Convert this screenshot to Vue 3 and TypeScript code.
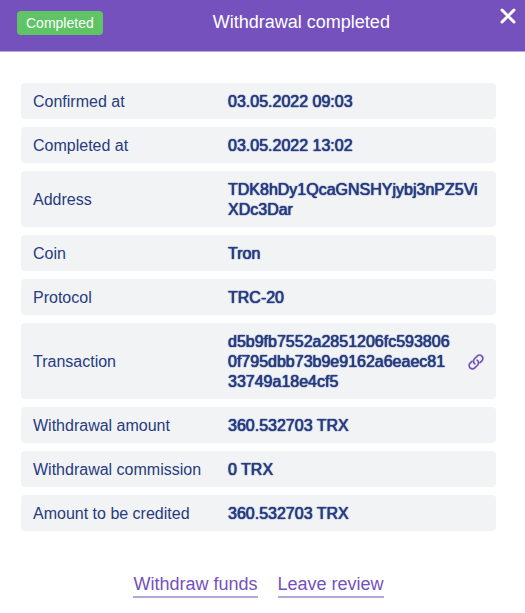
<script setup lang="ts">
interface Detail {
  label: string
  value: string
  href?: string
}

const details: Detail[] = [
  { label: 'Confirmed at', value: '03.05.2022 09:03' },
  { label: 'Completed at', value: '03.05.2022 13:02' },
  { label: 'Address', value: 'TDK8hDy1QcaGNSHYjybj3nPZ5ViXDc3Dar' },
  { label: 'Coin', value: 'Tron' },
  { label: 'Protocol', value: 'TRC-20' },
  {
    label: 'Transaction',
    value: 'd5b9fb7552a2851206fc5938060f795dbb73b9e9162a6eaec8133749a18e4cf5',
    href: '#transaction',
  },
  { label: 'Withdrawal amount', value: '360.532703 TRX' },
  { label: 'Withdrawal commission', value: '0 TRX' },
  { label: 'Amount to be credited', value: '360.532703 TRX' },
]
</script>

<template>
  <main class="dialog">
    <header class="header">
      <span class="badge">Completed</span>
      <h1 class="title">Withdrawal completed</h1>
      <button class="close" type="button" aria-label="Close">
        <svg width="16" height="16" viewBox="0 0 16 16" aria-hidden="true">
          <path d="M2 2L14 14M14 2L2 14" fill="none" stroke="currentColor" stroke-width="3" stroke-linecap="round" />
        </svg>
      </button>
    </header>

    <dl class="details">
      <div v-for="item in details" :key="item.label" class="row">
        <dt class="label">{{ item.label }}</dt>
        <dd class="value">
          <span class="text">{{ item.value }}</span>
          <a v-if="item.href" class="icon-link" :href="item.href" aria-label="View transaction">
            <svg width="16" height="16" viewBox="0 0 16 16" aria-hidden="true">
              <g fill="none" stroke="currentColor" stroke-width="1.7" stroke-linecap="round" stroke-linejoin="round">
                <path d="M6.9 9.9a3.3 3.3 0 0 1-.6-4.9l2.9-2.9a3.3 3.3 0 0 1 4.7 4.7l-1.9 1.9" />
                <path d="M9.1 6.1a3.3 3.3 0 0 1 .6 4.9l-2.9 2.9a3.3 3.3 0 0 1-4.7-4.7l1.9-1.9" />
              </g>
            </svg>
          </a>
        </dd>
      </div>
    </dl>

    <nav class="actions">
      <a class="action" href="#withdraw">Withdraw funds</a>
      <a class="action" href="#review">Leave review</a>
    </nav>
  </main>
</template>

<style>
body {
  background: #fff;
}
</style>

<style scoped>
.dialog {
  font-family: "Liberation Sans", Arial, sans-serif;
  font-size: 16px;
  line-height: 20px;
  color: #273b80;
}

.header {
  display: flex;
  align-items: flex-start;
  padding: 8px 9px 8px 17px;
  min-height: 35px;
  background: #7451bd;
  border-bottom: 1px solid #b9a5e0;
  color: #fff;
}

.badge {
  margin-top: 3px;
  padding: 2px 9px;
  border-radius: 4px;
  background: #5fc466;
  font-size: 14px;
}

.title {
  flex: 1;
  margin: 4px 0 0;
  font-size: 18px;
  font-weight: 400;
  text-align: center;
}

.close {
  display: flex;
  padding: 0;
  border: 0;
  background: none;
  color: inherit;
  cursor: pointer;
}

.details {
  display: flex;
  flex-direction: column;
  gap: 8px;
  margin: 0;
  padding: 31px 29px 0 21px;
}

.row {
  display: grid;
  grid-template-columns: 195px minmax(0, 1fr);
  align-items: center;
  padding: 9px 12px 7px;
  border-radius: 4px;
  background: #f2f3f5;
}

.value {
  display: flex;
  align-items: center;
  margin: 0;
  text-shadow: 0 0 1px currentColor, 0 0 1px currentColor;
}

.text {
  flex: 1;
  min-width: 0;
  word-break: break-all;
}

.icon-link {
  display: flex;
  margin-left: 16px;
  color: #7451bd;
}

.actions {
  display: flex;
  justify-content: center;
  gap: 20px;
  padding: 43px 8px 16px 0;
  font-size: 18px;
}

.action {
  padding-bottom: 2px;
  border-bottom: 2px solid #b9a5dc;
  color: #7451bd;
  text-decoration: none;
}
</style>
